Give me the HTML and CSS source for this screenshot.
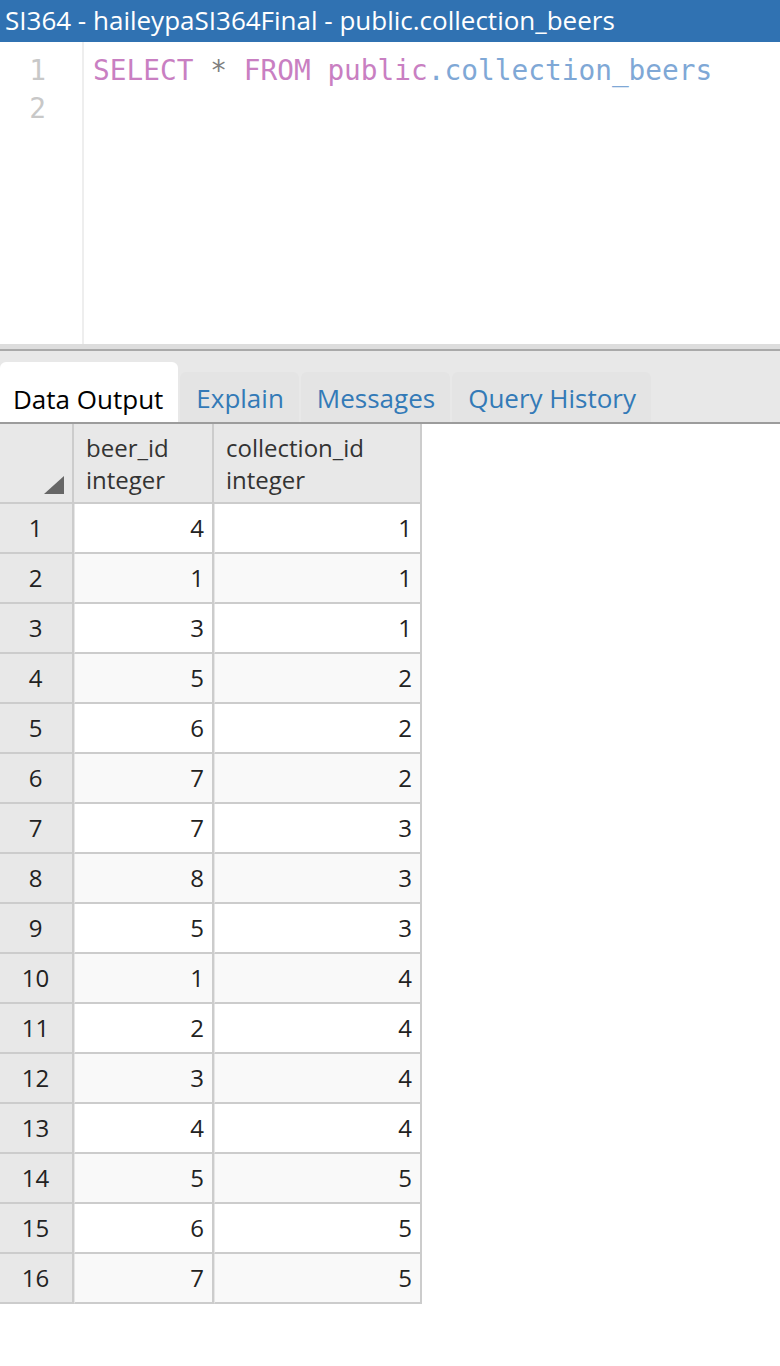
FILE: index.html
```html
<!DOCTYPE html>
<html>
<head>
<meta charset="utf-8">
<link rel="stylesheet" href="styles.css">
</head>
<body>
<div class="titlebar">SI364 - haileypaSI364Final - public.collection_beers</div>
<div class="editor">
  <div class="gutter">
    <div class="ln">1</div>
    <div class="ln">2</div>
  </div>
  <div class="code">
    <div class="line"><span class="kw">SELECT</span> <span class="op">*</span> <span class="kw">FROM</span> <span class="kw">public</span><span class="id">.collection_beers</span></div>
    <div class="line">&nbsp;</div>
  </div>
</div>
<div class="splitter"></div>
<div class="tabs">
  <div class="tab active">Data Output</div>
  <div class="tab">Explain</div>
  <div class="tab">Messages</div>
  <div class="tab">Query History</div>
</div>
<table class="grid">
  <thead>
    <tr>
      <th class="corner"><span class="tri"></span></th>
      <th class="c1">beer_id<br>integer</th>
      <th class="c2">collection_id<br>integer</th>
    </tr>
  </thead>
  <tbody>
    <tr><td class="rn">1</td><td>4</td><td>1</td></tr>
    <tr><td class="rn">2</td><td>1</td><td>1</td></tr>
    <tr><td class="rn">3</td><td>3</td><td>1</td></tr>
    <tr><td class="rn">4</td><td>5</td><td>2</td></tr>
    <tr><td class="rn">5</td><td>6</td><td>2</td></tr>
    <tr><td class="rn">6</td><td>7</td><td>2</td></tr>
    <tr><td class="rn">7</td><td>7</td><td>3</td></tr>
    <tr><td class="rn">8</td><td>8</td><td>3</td></tr>
    <tr><td class="rn">9</td><td>5</td><td>3</td></tr>
    <tr><td class="rn">10</td><td>1</td><td>4</td></tr>
    <tr><td class="rn">11</td><td>2</td><td>4</td></tr>
    <tr><td class="rn">12</td><td>3</td><td>4</td></tr>
    <tr><td class="rn">13</td><td>4</td><td>4</td></tr>
    <tr><td class="rn">14</td><td>5</td><td>5</td></tr>
    <tr><td class="rn">15</td><td>6</td><td>5</td></tr>
    <tr><td class="rn">16</td><td>7</td><td>5</td></tr>
  </tbody>
</table>
</body>
</html>
```

FILE: styles.css
```css
html, body {
  margin: 0;
  padding: 0;
  background: #ffffff;
  font-family: "Open Sans", "DejaVu Sans", sans-serif;
}

.titlebar {
  height: 42px;
  background: #3072b2;
  color: #ffffff;
  font-size: 26px;
  line-height: 40px;
  padding-left: 5px;
  letter-spacing: 0;
  white-space: nowrap;
}

.editor {
  display: flex;
  height: 302px;
  background: #ffffff;
}

.gutter {
  width: 46px;
  padding: 10px 36px 0 0;
  border-right: 2px solid #eeeeee;
}

.code {
  padding: 10px 0 0 9px;
}

.ln {
  font-family: "DejaVu Sans Mono", monospace;
  font-size: 27.8px;
  line-height: 38px;
  color: #c8c8c8;
  text-align: right;
}

.line {
  font-family: "DejaVu Sans Mono", monospace;
  font-size: 27.8px;
  line-height: 38px;
  white-space: pre;
  color: #555555;
}

.kw { color: #c97fc2; }
.op { color: #808080; }
.id { color: #7fa8d6; }

.splitter {
  height: 5px;
  background: #dddddd;
  border-bottom: 2px solid #a9a9a9;
}

.tabs {
  display: flex;
  align-items: flex-end;
  height: 71px;
  background: #e8e8e8;
  border-bottom: 2px solid #9c9c9c;
  gap: 2px;
}

.tab {
  font-size: 26px;
  color: #337ab7;
  height: 50px;
  line-height: 52px;
  padding: 0 15px 0 16px;
  background: #e4e4e4;
  border-radius: 6px 6px 0 0;
  white-space: nowrap;
}

.tab.active {
  height: 60px;
  line-height: 74px;
  background: #ffffff;
  color: #000000;
  padding: 0 15px 0 13px;
}

.grid {
  border-collapse: separate;
  border-spacing: 0;
  font-size: 24px;
  color: #222222;
}

.grid th {
  background: #e8e8e8;
  font-weight: normal;
  text-align: left;
  vertical-align: top;
  height: 80px;
  padding: 8px 0 0 12px;
  line-height: 32px;
  border-right: 2px solid #cccccc;
  border-bottom: 2px solid #cccccc;
  box-sizing: border-box;
  color: #333333;
}

.grid th.corner {
  width: 74px;
  padding: 0;
  position: relative;
}

.tri {
  position: absolute;
  right: 8px;
  bottom: 8px;
  width: 0;
  height: 0;
  border-left: 20px solid transparent;
  border-bottom: 18px solid #666666;
}

.grid th.c1 { width: 140px; }
.grid th.c2 { width: 208px; }

.grid td {
  height: 50px;
  box-sizing: border-box;
  text-align: right;
  padding: 0 8px 0 0;
  border-right: 2px solid #cccccc;
  border-bottom: 2px solid #cccccc;
  border-left: 1px solid #e6e6e6;
  line-height: 46px;
  background: #ffffff;
}

.grid tbody tr:nth-child(even) td {
  background: #f9f9f9;
}

.grid td.rn {
  background: #e8e8e8;
  text-align: center;
  padding: 0 1px 0 0;
  border-left: none;
}

.grid tbody tr:nth-child(even) td.rn {
  background: #e8e8e8;
}
```
